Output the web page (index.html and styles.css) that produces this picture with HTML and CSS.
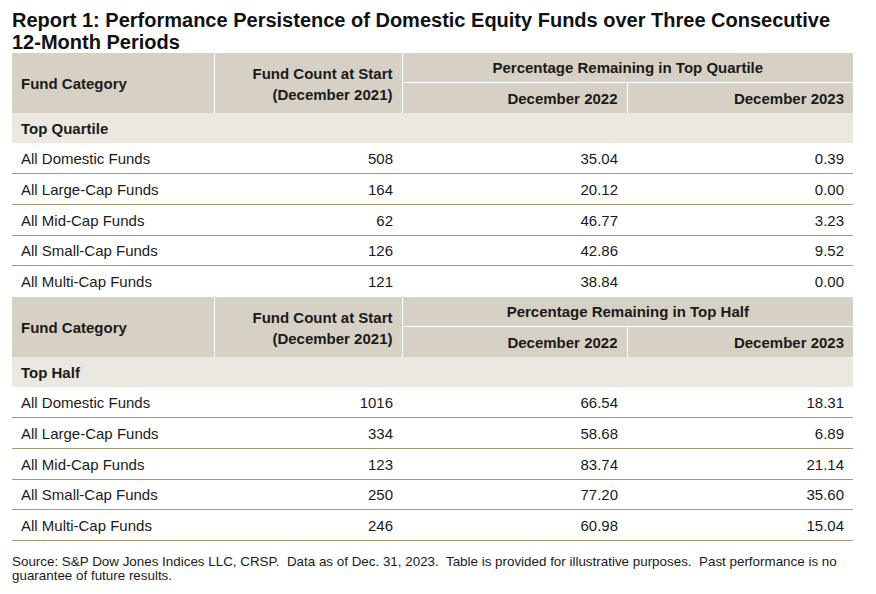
FILE: index.html
```html
<!DOCTYPE html>
<html>
<head>
<meta charset="utf-8">
<link rel="stylesheet" href="styles.css">
</head>
<body>
<div class="page">
  <h1 class="title">Report 1: Performance Persistence of Domestic Equity Funds over Three Consecutive<br>12-Month Periods</h1>
  <table class="report">
    <colgroup>
      <col class="c1"><col class="c2"><col class="c3"><col class="c4">
    </colgroup>
    <tbody>
      <tr class="hdr top">
        <th rowspan="2" class="left sep">Fund Category</th>
        <th rowspan="2" class="right sep count">Fund Count at Start<br>(December 2021)</th>
        <th colspan="2" class="center under">Percentage Remaining in Top Quartile</th>
      </tr>
      <tr class="hdr">
        <th class="right sep">December 2022</th>
        <th class="right">December 2023</th>
      </tr>
      <tr class="section"><td colspan="4">Top Quartile</td></tr>
      <tr class="row"><td>All Domestic Funds</td><td class="num">508</td><td class="num">35.04</td><td class="num">0.39</td></tr>
      <tr class="row"><td>All Large-Cap Funds</td><td class="num">164</td><td class="num">20.12</td><td class="num">0.00</td></tr>
      <tr class="row"><td>All Mid-Cap Funds</td><td class="num">62</td><td class="num">46.77</td><td class="num">3.23</td></tr>
      <tr class="row short"><td>All Small-Cap Funds</td><td class="num">126</td><td class="num">42.86</td><td class="num">9.52</td></tr>
      <tr class="row last"><td>All Multi-Cap Funds</td><td class="num">121</td><td class="num">38.84</td><td class="num">0.00</td></tr>
      <tr class="hdr top">
        <th rowspan="2" class="left sep">Fund Category</th>
        <th rowspan="2" class="right sep count">Fund Count at Start<br>(December 2021)</th>
        <th colspan="2" class="center under">Percentage Remaining in Top Half</th>
      </tr>
      <tr class="hdr">
        <th class="right sep">December 2022</th>
        <th class="right">December 2023</th>
      </tr>
      <tr class="section"><td colspan="4">Top Half</td></tr>
      <tr class="row"><td>All Domestic Funds</td><td class="num">1016</td><td class="num">66.54</td><td class="num">18.31</td></tr>
      <tr class="row"><td>All Large-Cap Funds</td><td class="num">334</td><td class="num">58.68</td><td class="num">6.89</td></tr>
      <tr class="row"><td>All Mid-Cap Funds</td><td class="num">123</td><td class="num">83.74</td><td class="num">21.14</td></tr>
      <tr class="row short"><td>All Small-Cap Funds</td><td class="num">250</td><td class="num">77.20</td><td class="num">35.60</td></tr>
      <tr class="row"><td>All Multi-Cap Funds</td><td class="num">246</td><td class="num">60.98</td><td class="num">15.04</td></tr>
    </tbody>
  </table>
  <p class="note">Source: S&amp;P Dow Jones Indices LLC, CRSP.&nbsp; Data as of Dec. 31, 2023.&nbsp; Table is provided for illustrative purposes.&nbsp; Past performance is no guarantee of future results.</p>
</div>
</body>
</html>
```

FILE: styles.css
```css
html, body {
  margin: 0;
  padding: 0;
  background: #ffffff;
}

.page {
  padding: 9px 12px 0 12px;
  font-family: "Liberation Sans", Arial, sans-serif;
  color: #1a1a1a;
  width: 841px;
}

.title {
  margin: 0;
  font-size: 20px;
  line-height: 22px;
  font-weight: bold;
  color: #111111;
  white-space: nowrap;
}

.report {
  border-collapse: collapse;
  table-layout: fixed;
  width: 841px;
  font-size: 15px;
}

.c1 { width: 202px; }
.c2 { width: 188px; }
.c3 { width: 225px; }
.c4 { width: 226px; }

.report th,
.report td {
  padding: 0 9px;
  white-space: nowrap;
}

.hdr th {
  background: #d7d1c5;
  height: 30px;
  font-weight: bold;
  color: #1a1a1a;
  line-height: 21px;
  vertical-align: middle;
}

.hdr.top th.under { height: 29px; }

.hdr th.left { text-align: left; }
.hdr th.right { text-align: right; }
.hdr th.center { text-align: center; }
.hdr th.sep { border-right: 1px solid #ffffff; }
.hdr th.under { border-bottom: 1px solid #ffffff; }
.hdr th.count { padding-top: 1px; }

.section td {
  background: #ebe8e1;
  height: 30px;
  font-weight: bold;
}

.row td {
  height: 30px;
  border-bottom: 1px solid #a8976f;
}

.row.short td {
  height: 29px;
}

.row.last td {
  height: 31px;
  border-bottom: none;
}

.num {
  text-align: right;
}

.note {
  margin: 14px 0 0 0;
  font-size: 13.4px;
  line-height: 14px;
  color: #1a1a1a;
}
```
